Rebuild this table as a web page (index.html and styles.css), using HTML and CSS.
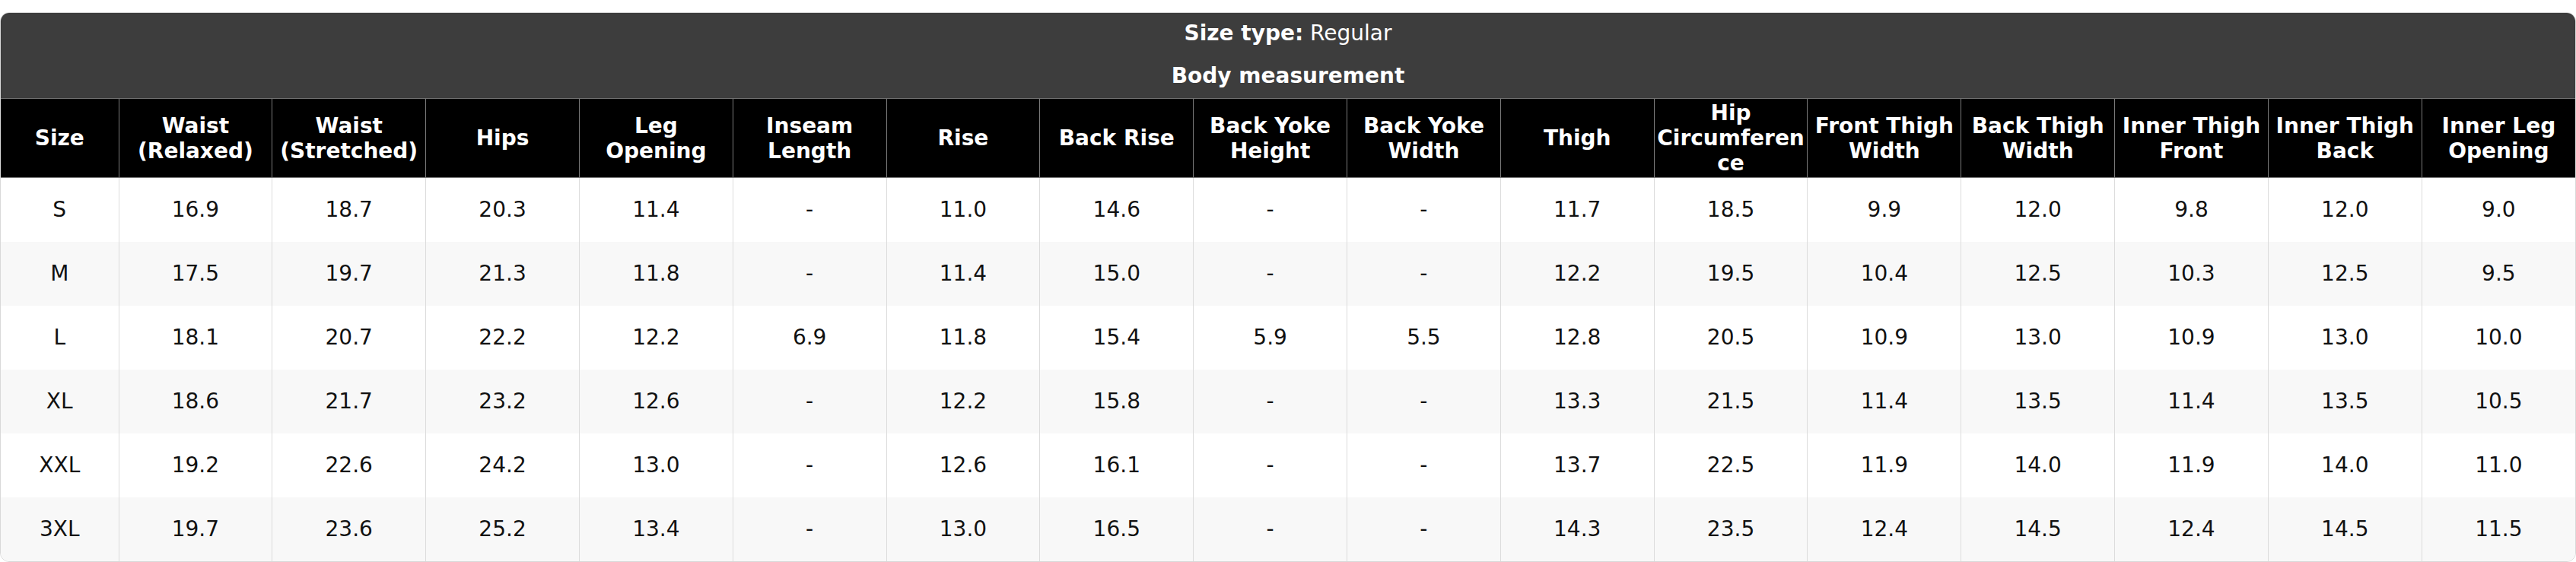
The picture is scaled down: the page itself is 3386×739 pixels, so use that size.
FILE: index.html
```html
<!DOCTYPE html>
<html lang="en">
<head>
<meta charset="utf-8">
<title>Size chart</title>
<link rel="stylesheet" href="styles.css">
</head>
<body>
<div class="card">
  <div class="size-type"><strong>Size type:</strong> Regular</div>
  <table class="chart">
    <colgroup>
      <col class="col-size">
      <col span="16">
    </colgroup>
    <thead>
      <tr class="group"><th colspan="17">Body measurement</th></tr>
      <tr class="cols">
        <th>Size</th>
        <th>Waist (Relaxed)</th>
        <th>Waist (Stretched)</th>
        <th>Hips</th>
        <th>Leg Opening</th>
        <th>Inseam Length</th>
        <th>Rise</th>
        <th>Back Rise</th>
        <th>Back Yoke Height</th>
        <th>Back Yoke Width</th>
        <th>Thigh</th>
        <th>Hip Circumference</th>
        <th>Front Thigh Width</th>
        <th>Back Thigh Width</th>
        <th>Inner Thigh Front</th>
        <th>Inner Thigh Back</th>
        <th>Inner Leg Opening</th>
      </tr>
    </thead>
    <tbody>
      <tr><td>S</td><td>16.9</td><td>18.7</td><td>20.3</td><td>11.4</td><td>-</td><td>11.0</td><td>14.6</td><td>-</td><td>-</td><td>11.7</td><td>18.5</td><td>9.9</td><td>12.0</td><td>9.8</td><td>12.0</td><td>9.0</td></tr>
      <tr><td>M</td><td>17.5</td><td>19.7</td><td>21.3</td><td>11.8</td><td>-</td><td>11.4</td><td>15.0</td><td>-</td><td>-</td><td>12.2</td><td>19.5</td><td>10.4</td><td>12.5</td><td>10.3</td><td>12.5</td><td>9.5</td></tr>
      <tr><td>L</td><td>18.1</td><td>20.7</td><td>22.2</td><td>12.2</td><td>6.9</td><td>11.8</td><td>15.4</td><td>5.9</td><td>5.5</td><td>12.8</td><td>20.5</td><td>10.9</td><td>13.0</td><td>10.9</td><td>13.0</td><td>10.0</td></tr>
      <tr><td>XL</td><td>18.6</td><td>21.7</td><td>23.2</td><td>12.6</td><td>-</td><td>12.2</td><td>15.8</td><td>-</td><td>-</td><td>13.3</td><td>21.5</td><td>11.4</td><td>13.5</td><td>11.4</td><td>13.5</td><td>10.5</td></tr>
      <tr><td>XXL</td><td>19.2</td><td>22.6</td><td>24.2</td><td>13.0</td><td>-</td><td>12.6</td><td>16.1</td><td>-</td><td>-</td><td>13.7</td><td>22.5</td><td>11.9</td><td>14.0</td><td>11.9</td><td>14.0</td><td>11.0</td></tr>
      <tr><td>3XL</td><td>19.7</td><td>23.6</td><td>25.2</td><td>13.4</td><td>-</td><td>13.0</td><td>16.5</td><td>-</td><td>-</td><td>14.3</td><td>23.5</td><td>12.4</td><td>14.5</td><td>12.4</td><td>14.5</td><td>11.5</td></tr>
    </tbody>
  </table>
</div>
</body>
</html>
```
FILE: styles.css
```css
html, body {
  margin: 0;
  padding: 0;
  background: #ffffff;
}

body {
  font-family: "DejaVu Sans", "Liberation Sans", sans-serif;
  font-size: 28px;
  color: #111111;
}

.card {
  margin-top: 16px;
  border: 1px solid #d9d9d9;
  border-radius: 12px;
  overflow: hidden;
  background: #ffffff;
}

.size-type {
  background: #3d3d3d;
  color: #ffffff;
  text-align: center;
  line-height: 33px;
  padding: 10px 0 10px;
}

.size-type strong {
  font-weight: bold;
}

.chart {
  width: 100%;
  border-collapse: collapse;
  table-layout: fixed;
}

.col-size {
  width: 155px;
}

.group th {
  background: #3d3d3d;
  color: #ffffff;
  font-weight: bold;
  height: 59px;
  padding: 0;
  border: none;
  border-bottom: 1px solid #707070;
  vertical-align: middle;
}

.cols {
  height: 104px;
}

.cols th {
  background: #000000;
  color: #ffffff;
  font-weight: bold;
  padding: 2px 3px;
  border: 1px solid #7a7a7a;
  border-top: none;
  text-align: center;
  vertical-align: middle;
  overflow-wrap: break-word;
  word-wrap: break-word;
}

.cols th:first-child {
  border-left: none;
}

.cols th:last-child {
  border-right: none;
}

tbody tr {
  height: 84px;
}

tbody tr:nth-child(even) {
  background: #f8f8f8;
}

tbody td {
  padding: 0 3px;
  text-align: center;
  vertical-align: middle;
  border-left: 1px solid #dcdcdc;
  border-right: 1px solid #dcdcdc;
}

tbody td:first-child {
  border-left: none;
}

tbody td:last-child {
  border-right: none;
}
```
